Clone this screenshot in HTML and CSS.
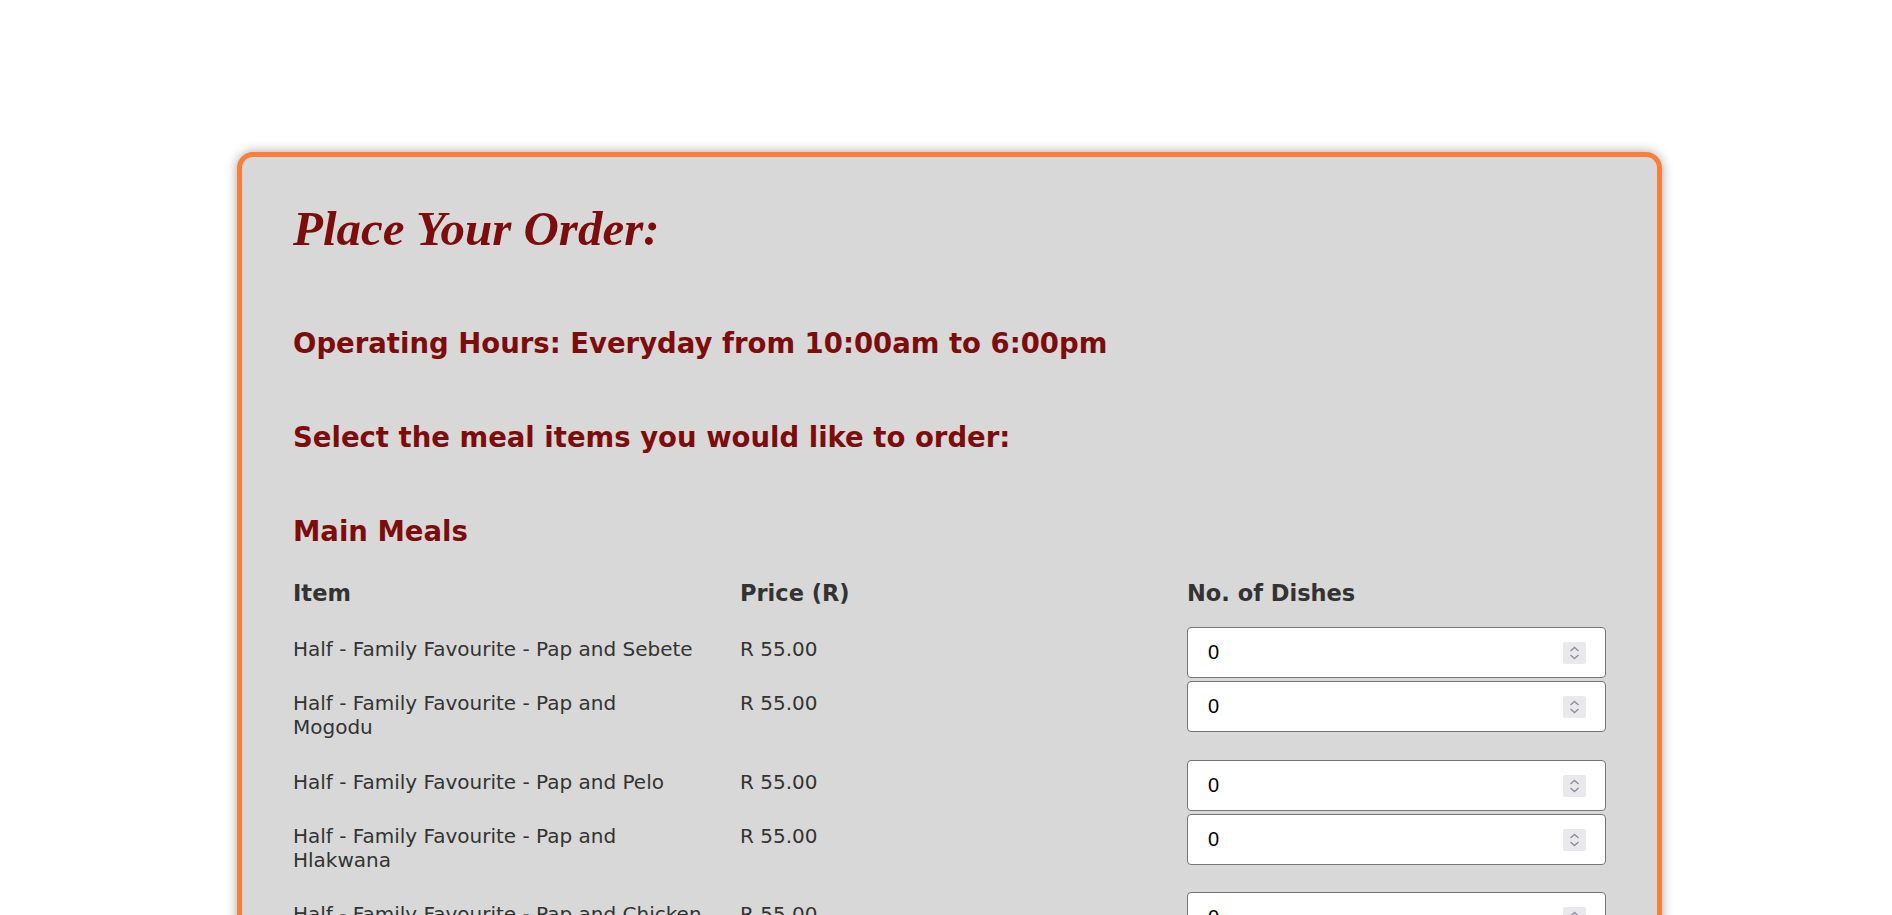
FILE: index.html
```html
<!DOCTYPE html>
<html lang="en">
<head>
    <meta charset="UTF-8">
    <meta name="viewport" content="width=device-width, initial-scale=1.0">
    <title>Place Your Order</title>
    <link rel="stylesheet" href="styles.css">
</head>
<body>
    <div class="page">
        <section class="order-card">
            <h1 class="order-title">Place Your Order:</h1>
            <h2 class="order-note hours">Operating Hours: Everyday from 10:00am to 6:00pm</h2>
            <h2 class="order-note">Select the meal items you would like to order:</h2>

            <form id="orderForm">
                <h3 class="menu-heading">Main Meals</h3>
                <div class="menu-grid">
                    <div class="menu-head">Item</div>
                    <div class="menu-head">Price (R)</div>
                    <div class="menu-head">No. of Dishes</div>

                    <div class="menu-item">Half - Family Favourite - Pap and Sebete</div>
                    <div class="menu-price">R 55.00</div>
                    <div class="menu-qty">
                        <input type="number" name="half_sebete" min="0" value="0">
                        <svg class="spin" viewBox="0 0 23 22"><path d="M7.5 9 11.5 5.5 15.5 9M7.5 13 11.5 16.5 15.5 13"/></svg>
                    </div>

                    <div class="menu-item">Half - Family Favourite - Pap and Mogodu</div>
                    <div class="menu-price">R 55.00</div>
                    <div class="menu-qty">
                        <input type="number" name="half_mogodu" min="0" value="0">
                        <svg class="spin" viewBox="0 0 23 22"><path d="M7.5 9 11.5 5.5 15.5 9M7.5 13 11.5 16.5 15.5 13"/></svg>
                    </div>

                    <div class="menu-item">Half - Family Favourite - Pap and Pelo</div>
                    <div class="menu-price">R 55.00</div>
                    <div class="menu-qty">
                        <input type="number" name="half_pelo" min="0" value="0">
                        <svg class="spin" viewBox="0 0 23 22"><path d="M7.5 9 11.5 5.5 15.5 9M7.5 13 11.5 16.5 15.5 13"/></svg>
                    </div>

                    <div class="menu-item">Half - Family Favourite - Pap and Hlakwana</div>
                    <div class="menu-price">R 55.00</div>
                    <div class="menu-qty">
                        <input type="number" name="half_hlakwana" min="0" value="0">
                        <svg class="spin" viewBox="0 0 23 22"><path d="M7.5 9 11.5 5.5 15.5 9M7.5 13 11.5 16.5 15.5 13"/></svg>
                    </div>

                    <div class="menu-item">Half - Family Favourite - Pap and Chicken</div>
                    <div class="menu-price">R 55.00</div>
                    <div class="menu-qty">
                        <input type="number" name="half_chicken" min="0" value="0">
                        <svg class="spin" viewBox="0 0 23 22"><path d="M7.5 9 11.5 5.5 15.5 9M7.5 13 11.5 16.5 15.5 13"/></svg>
                    </div>

                    <div class="menu-item">Full - Family Favourite - Pap and Sebete</div>
                    <div class="menu-price">R 95.00</div>
                    <div class="menu-qty">
                        <input type="number" name="full_sebete" min="0" value="0">
                        <svg class="spin" viewBox="0 0 23 22"><path d="M7.5 9 11.5 5.5 15.5 9M7.5 13 11.5 16.5 15.5 13"/></svg>
                    </div>
                </div>

                <button type="submit" class="order-button">Place Order</button>
            </form>
        </section>
    </div>
</body>
</html>
```

FILE: styles.css
```css
html {
    scrollbar-width: none;
}
body {
    margin: 0;
    background-color: #fff;
    font-family: "DejaVu Sans", Verdana, sans-serif;
    color: #333;
}
.page {
    padding: 152px 0 60px 0;
}
.order-card {
    box-sizing: border-box;
    width: 1425px;
    margin: 0 230px 0 237px;
    padding: 44px 51px 40px;
    background-color: #d8d8d8;
    border: 5px solid #fa7d3c;
    border-radius: 16px;
    box-shadow: 0 0 12px rgba(0, 0, 0, 0.35);
}
.order-title {
    margin: 0 0 70px;
    font-family: "Liberation Serif", "Times New Roman", serif;
    font-style: italic;
    font-weight: bold;
    font-size: 49px;
    line-height: 56px;
    color: #7d0c0c;
}
.order-note,
.menu-heading {
    margin: 0 0 61px;
    font-size: 27.5px;
    line-height: 33px;
    font-weight: bold;
    color: #7d0c0c;
}
.menu-heading {
    margin-bottom: 32px;
}
.menu-grid {
    display: grid;
    grid-template-columns: repeat(3, 1fr);
    column-gap: 28px;
}
.menu-head {
    padding-bottom: 20px;
    font-size: 22.5px;
    line-height: 27px;
    font-weight: bold;
    color: #333;
}
.menu-item,
.menu-price {
    padding: 10px 10px 20px 0;
    font-size: 20px;
    line-height: 24.2px;
    color: #333;
}
.menu-qty {
    position: relative;
}
.menu-qty input {
    box-sizing: border-box;
    width: 100%;
    height: 51px;
    padding: 0 20px;
    font-family: "Liberation Sans", Arial, sans-serif;
    font-size: 20px;
    color: #000;
    background-color: #fff;
    border: 1px solid #767676;
    border-radius: 4px;
    -moz-appearance: textfield;
}
.menu-qty input::-webkit-inner-spin-button,
.menu-qty input::-webkit-outer-spin-button {
    -webkit-appearance: none;
    margin: 0;
}
.spin {
    position: absolute;
    top: 15px;
    right: 20px;
    width: 23px;
    height: 22px;
    background-color: #e9e9ed;
    border-radius: 2px;
    fill: none;
    stroke: #8f8f9d;
    stroke-width: 1.4;
    pointer-events: none;
}
.order-button {
    margin-top: 30px;
    padding: 12px 24px;
    font-family: inherit;
    font-size: 20px;
    color: #fff;
    background-color: #7d0c0c;
    border: none;
    border-radius: 6px;
    cursor: pointer;
}
```
